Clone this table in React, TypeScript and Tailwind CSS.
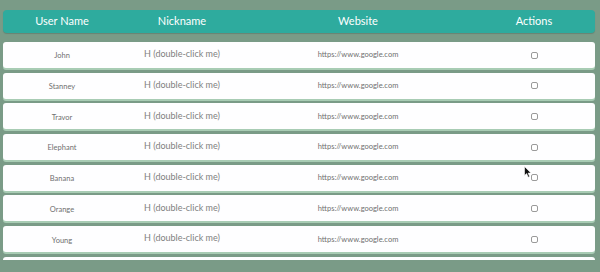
import React from "react";

const users = ["John", "Stanney", "Travor", "Elephant", "Banana", "Orange", "Young"];

function Cursor() {
  return (
    <svg
      className="absolute left-[524px] top-[166px]"
      width="8"
      height="12"
      viewBox="0 0 8 12"
    >
      <path d="M0.5 0.5 L0.5 9.5 L2.6 7.6 L4.2 11.2 L5.6 10.6 L4.1 7.1 L7 7.1 Z" fill="#111" stroke="#fff" strokeWidth="0.6" />
    </svg>
  );
}

export default function App() {
  return (
    <div
      className="relative w-[600px] h-[272px] overflow-hidden bg-[#7a9b87] px-[3px] pt-[10px]"
      style={{ fontFamily: "Lato, 'Open Sans', sans-serif" }}
    >
      {/* header */}
      <div className="grid grid-cols-[118px_122px_230px_122px] items-center h-[23px] w-[592px] rounded-[4px] bg-[#2eab9e] text-white text-[11px] shadow-[0_1px_1px_rgba(0,0,0,0.15)]">
        <div className="text-center">User Name</div>
        <div className="text-center">Nickname</div>
        <div className="text-center">Website</div>
        <div className="text-center">Actions</div>
      </div>

      {/* rows, clipped like a scroll area */}
      <div className="flex flex-col gap-[4.7px] mt-[9px] h-[218px] overflow-hidden">
        {users.map((name) => (
          <div
            key={name}
            className="grid grid-cols-[118px_122px_230px_122px] items-center h-[26px] w-[592px] shrink-0 rounded-[3px] bg-[#fefeff] shadow-[0_2px_0_#a8ccb4]"
          >
            <div className="text-center text-[7.5px] text-[#707070] pt-[2px]">{name}</div>
            <div className="text-center text-[9px] text-[#808080] -mt-[2px]">H (double-click me)</div>
            <div className="text-center text-[7.5px] text-[#707070]">https://www.google.com</div>
            <div className="flex justify-center">
              <div className="w-[7px] h-[7px] rounded-[2px] border border-[#9a9a9a] bg-white" />
            </div>
          </div>
        ))}
        <div className="h-[26px] w-[592px] shrink-0 rounded-[3px] bg-[#fefeff]" />
      </div>

      <Cursor />
    </div>
  );
}
